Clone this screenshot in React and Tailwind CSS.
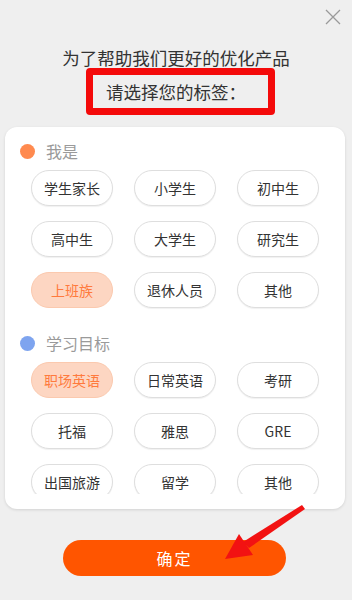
import React from "react"

const font = { fontFamily: '"Noto Sans CJK SC", "Noto Sans", sans-serif' }

function Chip({ label, active }) {
  return (
    <div
      className={
        active
          ? "h-[36px] w-[82px] rounded-full flex items-center justify-center text-[14px] bg-[#fdd6c2] text-[#ff7a3d] border border-[#fbc9ae]"
          : "h-[36px] w-[82px] rounded-full flex items-center justify-center text-[14px] bg-white text-[#333] border border-[#dedede] shadow-[0_1px_1px_rgba(0,0,0,0.06)]"
      }
    >
      {label}
    </div>
  )
}

function Section({ title, dot, items, active, className }) {
  return (
    <div className={className}>
      {/* Section header */}
      <div className="flex items-center h-[20px] pl-[15px]">
        <span className={"w-[15px] h-[15px] rounded-full " + dot} />
        <span className="ml-[11px] text-[16px] text-[#9a9a9a]">{title}</span>
      </div>

      {/* Tags */}
      <div className="mt-[9px] pl-[26px] grid grid-cols-[82px_82px_82px] gap-x-[21px] gap-y-[15px]">
        {items.map((it) => (
          <Chip key={it} label={it} active={it === active} />
        ))}
      </div>
    </div>
  )
}

export default function App() {
  return (
    <div className="relative w-[352px] h-[600px] bg-[#efefef] overflow-hidden flex flex-col" style={font}>
      {/* Close */}
      <div className="flex justify-end pt-[9px] pr-[11px]">
        <svg width="16" height="16" viewBox="0 0 16 16" stroke="#9a9a9a" strokeWidth="1.3" fill="none">
          <path d="M1 1L15 15M15 1L1 15" />
        </svg>
      </div>

      {/* Title */}
      <div className="mt-[21px] text-center text-[17.5px] leading-[24px] text-[#333]">
        为了帮助我们更好的优化产品
      </div>
      <div className="relative mt-[10px] text-center text-[17.5px] leading-[24px] text-[#333]">
        请选择您的标签：
        <div className="absolute left-[86px] top-[-12px] w-[189px] h-[47px] border-[7px] border-[#f40a0a] rounded-[4px]" />
      </div>

      {/* Card */}
      <div className="mt-[23px] ml-[5px] w-[340px] h-[382px] bg-white rounded-[12px] shadow-[0_1px_3px_rgba(0,0,0,0.12)] pb-[15px]">
        <div className="h-[367px] overflow-hidden pt-[14px]">
          <Section
            title="我是"
            dot="bg-[#ff8a4f]"
            items={["学生家长", "小学生", "初中生", "高中生", "大学生", "研究生", "上班族", "退休人员", "其他"]}
            active="上班族"
          />
          <Section
            className="mt-[25px]"
            title="学习目标"
            dot="bg-[#7ea4ef]"
            items={["职场英语", "日常英语", "考研", "托福", "雅思", "GRE", "出国旅游", "留学", "其他"]}
            active="职场英语"
          />
        </div>
      </div>

      {/* Confirm */}
      <button className="mt-[31px] ml-[63px] w-[223px] h-[36px] rounded-full bg-[#ff5500] text-white text-[16px] tracking-[2px]">
        确定
      </button>

      {/* Red annotation arrow */}
      <svg className="absolute left-0 top-0" width="352" height="600" viewBox="0 0 352 600">
        <polygon points="302,505 305,509 249,548 243,542" fill="#f21212" />
        <polygon points="239,534 253,555 225,559" fill="#f21212" />
      </svg>
    </div>
  )
}
